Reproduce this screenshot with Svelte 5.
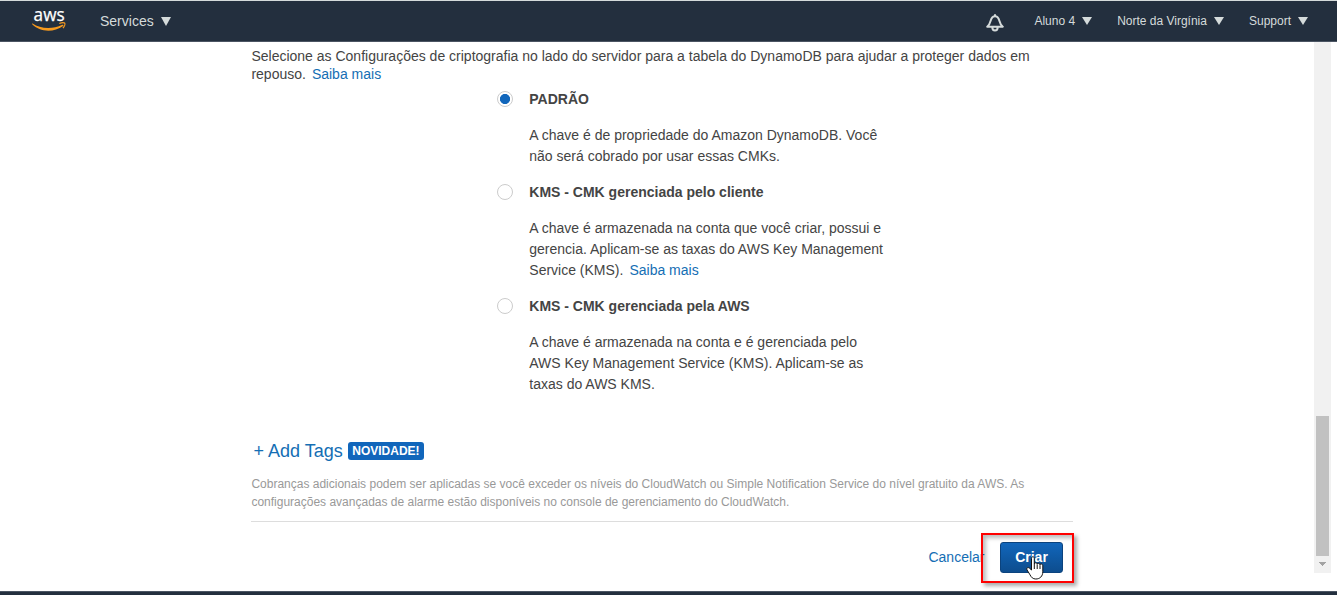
<script>
  const menus = ['Aluno 4', 'Norte da Virgínia', 'Support'];
  let selected = $state(0);
  const options = [
    {
      title: 'PADRÃO',
      lines: ['A chave é de propriedade do Amazon DynamoDB. Você', 'não será cobrado por usar essas CMKs.']
    },
    {
      title: 'KMS - CMK gerenciada pelo cliente',
      lines: [
        'A chave é armazenada na conta que você criar, possui e',
        'gerencia. Aplicam-se as taxas do AWS Key Management',
        'Service (KMS).'
      ],
      link: 'Saiba mais'
    },
    {
      title: 'KMS - CMK gerenciada pela AWS',
      lines: [
        'A chave é armazenada na conta e é gerenciada pelo',
        'AWS Key Management Service (KMS). Aplicam-se as',
        'taxas do AWS KMS.'
      ]
    }
  ];
</script>

<div class="page">
  <header>
    <svg class="logo" width="36" height="38" viewBox="0 -6 36 38">
      <text x="1.6" y="13.2" textLength="31" lengthAdjust="spacingAndGlyphs">aws</text>
      <path class="smile" d="M.6 15.600C8 20.700 20 21.900 30.300 16.800c1-.5 1.600.5.8 1.200C21.500 24.900 7.500 24 .2 16.300c-.3-.4 0-.9.4-.7z" />
      <path class="tip" d="M27.300 15.500c2-.9 4.800-.9 5.400-.4.600.8-.3 3.400-1.700 5" />
    </svg>
    <span class="services">Services<i class="caret big"></i></span>
    <svg class="bell" width="18" height="18" viewBox="0 0 18 18">
      <path d="M1.200 12.700C3.700 10.800 4.200 8.600 4.800 6.300 5.500 3.700 7 2.200 9 2.200s3.500 1.500 4.200 4.100c.6 2.300 1.100 4.500 3.600 6.400zM9 2.200V.3M6.300 13c0 4.700 5.400 4.700 5.400 0" />
    </svg>
    <nav>
      {#each menus as menu}
        <span class="menu">{menu}<i class="caret"></i></span>
      {/each}
    </nav>
  </header>

  <div class="body">
    <main>
      <p class="intro">
        <span class="line">Selecione as Configurações de criptografia no lado do servidor para a tabela do DynamoDB para ajudar a proteger dados em</span>
        <span class="line">repouso.<a href="#ajuda">Saiba mais</a></span>
      </p>

      <div class="options">
        {#each options as option, i}
          <section>
            <button class="radio" class:on={selected === i} aria-label={option.title} onclick={() => (selected = i)}></button>
            <div>
              <h3>{option.title}</h3>
              <p>
                {#each option.lines as line, n}
                  <span class="line">{line}{#if option.link && n === option.lines.length - 1}<a href="#kms">{option.link}</a>{/if}</span>
                {/each}
              </p>
            </div>
          </section>
        {/each}
      </div>

      <div class="tags"><a href="#tags">+ Add Tags</a><span class="badge">NOVIDADE!</span></div>

      <p class="note">
        <span class="line">Cobranças adicionais podem ser aplicadas se você exceder os níveis do CloudWatch ou Simple Notification Service do nível gratuito da AWS. As</span>
        <span class="line">configurações avançadas de alarme estão disponíveis no console de gerenciamento do CloudWatch.</span>
      </p>

      <div class="actions">
        <a class="cancel" href="#cancelar">Cancelar</a>
        <button class="create">Criar</button>
        <div class="highlight"></div>
        <svg class="cursor" width="18" height="24" viewBox="0 0 18 24">
          <path d="M5.500 14V2.300C5.500.2 8.300.2 8.300 2.300V8c0-1.600 2.900-1.600 2.900.2 0-1.400 2.800-1.200 2.800.6 0-1.400 2.800-1 2.800.9v6.100c0 4.500-3 7.200-7 7.200-3 0-4.500-1.700-5.800-4.200L1 13.900c-1-1.900 1-3.100 2.500-1.700zM8.300 8v5M11.200 8.500V13M14 9.200V13" />
        </svg>
      </div>
    </main>
    <aside>
      <div class="thumb"></div>
      <svg width="17" height="17" viewBox="0 0 17 17"><path d="M5 6h7v1h-1v1h-1v1H9v1H8V9H7V8H6V7H5z" /></svg>
    </aside>
  </div>
  <footer></footer>
</div>

<style>
  :global(body) { margin: 0; overflow: hidden; background: #fff; }
  * { box-sizing: border-box; }
  .page {
    display: flex; flex-direction: column; width: 1337px; height: 595px;
    font: 14px/18px "Liberation Sans", Arial, sans-serif; color: #444;
  }
  header {
    display: flex; align-items: center; flex: none; height: 42px; padding: 0 29px 0 32px;
    background: #232f3e; border-top: 1px solid #d5dbdb; border-bottom: 1px solid #4b5563; color: #d5dbdb;
  }
  .logo { flex: none; }
  .logo text { font: 500 18px/1 "Open Sans", "Noto Sans", sans-serif; fill: #fff; stroke: #fff; stroke-width: .25; }
  .smile { fill: #f79a1e; }
  .tip { fill: none; stroke: #f79a1e; stroke-width: 1.3; }
  .services { display: flex; align-items: center; margin-left: 32px; }
  .bell { margin: 3px 0 0 auto; fill: none; stroke: #d5dbdb; stroke-width: 2; stroke-linejoin: round; }
  nav { display: flex; gap: 25px; margin-left: 30px; font-size: 12px; }
  .menu { display: flex; align-items: center; white-space: nowrap; }
  .caret { margin-left: 7px; border: solid transparent; border-width: 8px 5px 0; border-top-color: #d5dbdb; }
  .caret.big { border-width: 9px 5.5px 0; border-top-color: #d5dbdb; }
  .body { display: flex; flex: 1; min-height: 0; }
  main { width: 822px; margin-left: 251px; padding-top: 5px; }
  p, h3 { margin: 0; }
  .intro, .note { text-indent: .4px; }
  .line { display: block; white-space: nowrap; }
  a { color: #146eb4; text-decoration: none; }
  .line a { margin-left: 6px; }
  .options { display: flex; flex-direction: column; gap: 15px; padding: 6px 0 0 246px; }
  section { display: flex; gap: 16.300px; line-height: 21px; }
  h3 { margin-bottom: 15px; font-size: 14px; line-height: 21px; }
  .radio { flex: none; width: 16px; height: 16px; margin-top: 2px; padding: 0; border: 1px solid #ccc; border-radius: 50%; background: #fff; }
  .radio.on { background: radial-gradient(circle, #1166bb 4.700px, #fff 5.400px); }
  .tags { display: flex; align-items: center; height: 20px; margin-top: 46px; padding-left: 2.500px; font-size: 18px; }
  .badge { height: 18px; margin-left: 5.500px; padding: 0 4px; border-radius: 3px; background: #1166bb; color: #fff; font-size: 12px; font-weight: 700; }
  .note { height: 47px; margin-top: 14px; border-bottom: 1px solid #ddd; color: #999; font-size: 12px; }
  .actions { position: relative; display: flex; justify-content: flex-end; align-items: center; gap: 15.500px; height: 31px; margin-top: 20px; padding-right: 10px; }
  .cancel { margin-bottom: 2px; }
  .create {
    width: 63px; height: 31px; padding: 0 0 2px; border: 1px solid #0b437e; border-radius: 3px;
    background: linear-gradient(#1166bb, #0d4d8e); color: #fff; font: 700 14px "Liberation Sans", Arial, sans-serif;
  }
  .highlight { position: absolute; left: 730px; top: -9px; width: 93px; height: 50px; border: 2px solid #f00; box-shadow: 3px 3px 4px #0005, inset 3px 3px 4px #0004; }
  .cursor { position: absolute; left: 775px; top: 14px; fill: #fff; stroke: #111; stroke-width: 1; }
  aside { display: flex; flex-direction: column; justify-content: flex-end; align-items: center; width: 17px; height: 531px; margin-left: 241px; background: #f1f1f1; }
  .thumb { width: 13px; height: 140px; background: #c1c1c1; }
  aside svg { fill: #a3a3a3; }
  footer { flex: none; height: 4px; background: #232f3e; border-top: 1px solid #4b5563; }
</style>
